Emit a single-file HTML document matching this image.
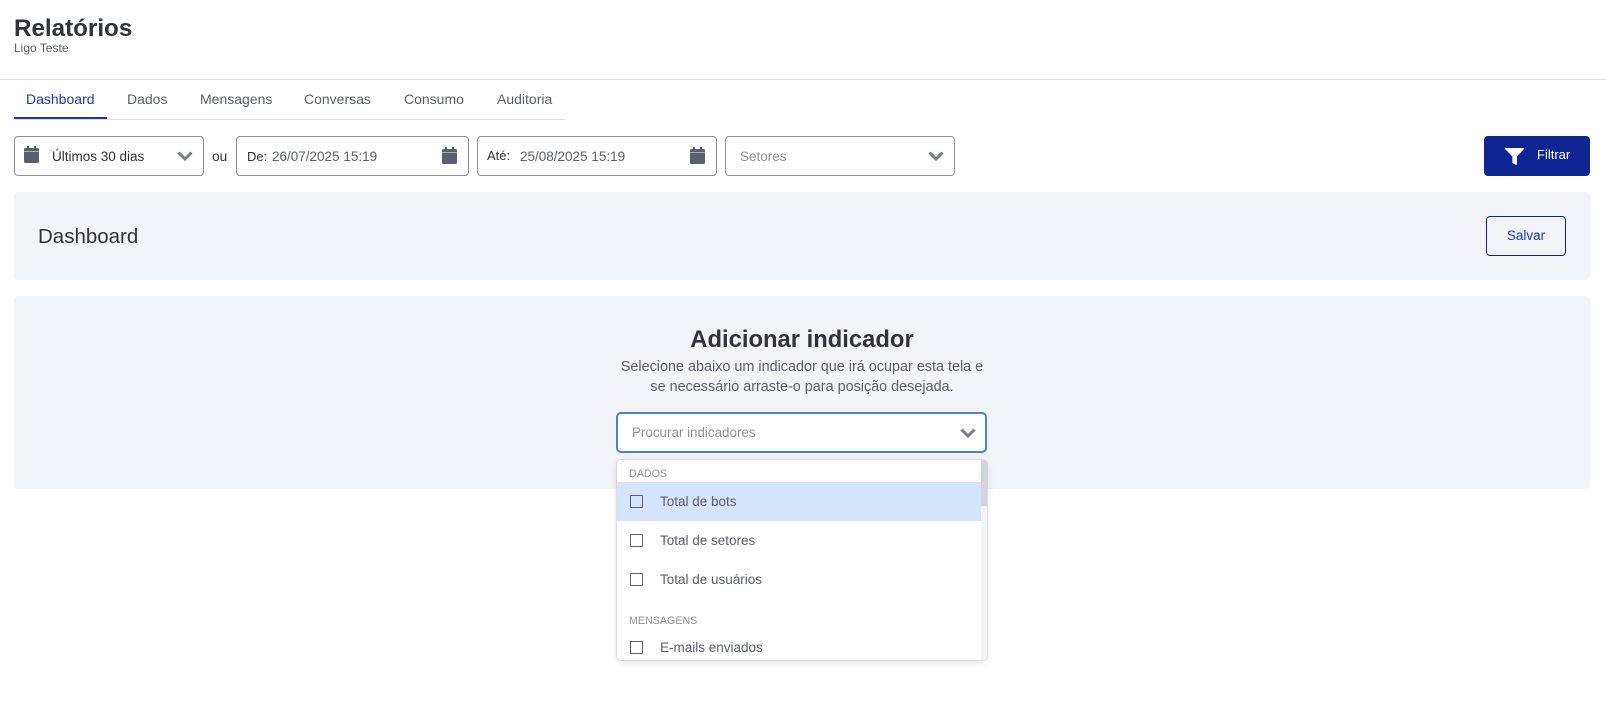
<!DOCTYPE html>
<html lang="pt-BR">
<head>
<meta charset="utf-8">
<title>Relatórios</title>
<style>
html,body{margin:0;padding:0;background:#fff}
body{width:1606px;height:722px;position:relative;overflow:hidden;font-family:"Liberation Sans",sans-serif;color:#5c5f6b}
.a{position:absolute;white-space:nowrap}
.box{position:absolute;box-sizing:border-box;background:#fff;border:1px solid #8f909b;border-radius:4px}
svg{position:absolute;display:block}
.tab{position:absolute;top:91px;font-size:14px;line-height:17px;color:#5c5f6b;white-space:nowrap}
.item{position:absolute;left:0;height:39px}
.cb{position:absolute;left:13px;box-sizing:border-box;width:13px;height:13px;border:1.5px solid #5c5f6b;border-radius:1px;background:transparent}
.lbl{position:absolute;left:43px;font-size:13.5px;line-height:16px;color:#5c5f6b;white-space:nowrap}
.grp{position:absolute;left:12px;font-size:10.7px;line-height:12px;color:#8f909b;white-space:nowrap}
</style>
</head>
<body>
<div class="a" style="left:14px;top:14px;font-size:24.2px;line-height:30px;font-weight:700;color:#30323c">Relatórios</div>
<div class="a" style="left:14px;top:41px;font-size:12px;line-height:14px;color:#5c5f6b">Ligo Teste</div>
<div class="a" style="left:0;top:79px;width:1606px;height:1px;background:#dedfe3"></div>

<div class="a" style="left:14px;top:119px;width:551px;height:1px;background:#dedfe3"></div>
<div class="a" style="left:14px;top:117px;width:93px;height:2px;background:#1a35b0"></div>
<div class="tab" style="left:26px;color:#1f3aa8">Dashboard</div>
<div class="tab" style="left:127px">Dados</div>
<div class="tab" style="left:200px">Mensagens</div>
<div class="tab" style="left:304px">Conversas</div>
<div class="tab" style="left:404px">Consumo</div>
<div class="tab" style="left:497px">Auditoria</div>

<div class="box" style="left:14px;top:136px;width:190px;height:40px"></div>
<svg style="left:24px;top:146px" width="15" height="17" viewBox="0 0 15 17"><path fill="#5c5f6b" d="M3 0h2v2h5V0h2v2h1.500A1.500 1.500 0 0 1 15 3.500V5.500H0V3.500A1.500 1.500 0 0 1 1.500 2H3zM0 6h15v9.500a1.500 1.500 0 0 1-1.500 1.500h-12A1.500 1.500 0 0 1 0 15.500z"/></svg>
<div class="a" style="left:52px;top:149px;font-size:13.5px;line-height:16px;color:#30323c">Últimos 30 dias</div>
<svg style="left:177px;top:151px" width="16" height="11" viewBox="0 0 16 11"><path fill="none" stroke="#7a7d87" stroke-width="3" d="M1.500 1.500 8 8l6.500-6.500"/></svg>
<div class="a" style="left:212px;top:149px;font-size:13.7px;line-height:16px;color:#30323c">ou</div>

<div class="box" style="left:236px;top:136px;width:233px;height:40px"></div>
<div class="a" style="left:247px;top:149px;font-size:13px;line-height:16px;color:#30323c">De:</div>
<div class="a" style="left:272px;top:149px;font-size:13.5px;line-height:16px;color:#5c5f6b">26/07/2025 15:19</div>
<svg style="left:442px;top:147px" width="15" height="17" viewBox="0 0 15 17"><path fill="#5c5f6b" d="M3 0h2v2h5V0h2v2h1.500A1.500 1.500 0 0 1 15 3.500V5.500H0V3.500A1.500 1.500 0 0 1 1.500 2H3zM0 6h15v9.500a1.500 1.500 0 0 1-1.500 1.500h-12A1.500 1.500 0 0 1 0 15.500z"/></svg>

<div class="box" style="left:477px;top:136px;width:240px;height:40px"></div>
<div class="a" style="left:487px;top:148px;font-size:13px;line-height:16px;color:#30323c">Até:</div>
<div class="a" style="left:520px;top:149px;font-size:13.5px;line-height:16px;color:#5c5f6b">25/08/2025 15:19</div>
<svg style="left:690px;top:147px" width="15" height="17" viewBox="0 0 15 17"><path fill="#5c5f6b" d="M3 0h2v2h5V0h2v2h1.500A1.500 1.500 0 0 1 15 3.500V5.500H0V3.500A1.500 1.500 0 0 1 1.500 2H3zM0 6h15v9.500a1.500 1.500 0 0 1-1.500 1.500h-12A1.500 1.500 0 0 1 0 15.500z"/></svg>

<div class="box" style="left:725px;top:136px;width:230px;height:40px"></div>
<div class="a" style="left:740px;top:149px;font-size:13.5px;line-height:16px;color:#8f909b">Setores</div>
<svg style="left:928px;top:151px" width="16" height="11" viewBox="0 0 16 11"><path fill="none" stroke="#7a7d87" stroke-width="3" d="M1.500 1.500 8 8l6.500-6.500"/></svg>

<div class="a" style="left:1484px;top:136px;width:106px;height:40px;background:#0f2594;border-radius:4px"></div>
<svg style="left:1505px;top:148px" width="19" height="17" viewBox="0 0 19 17"><path fill="#fff" d="M.8 0h17.400c.7 0 1 .8.500 1.300L12 8.500v7.500c0 .6-.6 1-1.100.7l-3-1.500c-.3-.2-.5-.5-.5-.8V8.500L.3 1.300C-.2.800.1 0 .8 0z"/></svg>
<div class="a" style="left:1537px;top:147px;font-size:13px;line-height:16px;color:#fff">Filtrar</div>

<div class="a" style="left:14px;top:192px;width:1576px;height:88px;background:#f3f4f8;border-radius:4px"></div>
<div class="a" style="left:38px;top:225px;font-size:20.5px;line-height:24px;color:#30323c">Dashboard</div>
<div class="a" style="left:1486px;top:216px;width:80px;height:40px;box-sizing:border-box;border:1px solid #0f2594;border-radius:4px"></div>
<div class="a" style="left:1486px;top:228px;width:80px;text-align:center;font-size:13.5px;line-height:16px;color:#1f3aa8">Salvar</div>

<div class="a" style="left:14px;top:296px;width:1576px;height:193px;background:#f3f4f8;border-radius:4px"></div>
<div class="a" style="left:14px;top:325px;width:1576px;text-align:center;font-size:23.8px;line-height:30px;font-weight:700;color:#30323c">Adicionar indicador</div>
<div class="a" style="left:14px;top:357px;width:1576px;text-align:center;font-size:14.4px;line-height:20px;color:#5c5f6b">Selecione abaixo um indicador que irá ocupar esta tela e</div>
<div class="a" style="left:14px;top:377px;width:1576px;text-align:center;font-size:14.4px;line-height:20px;color:#5c5f6b">se necessário arraste-o para posição desejada.</div>

<div class="a" style="left:616px;top:412px;width:371px;height:41px;box-sizing:border-box;background:#fff;border:2px solid #4a80d8;border-radius:5px"></div>
<div class="a" style="left:632px;top:425px;font-size:13.4px;line-height:16px;color:#8f909b">Procurar indicadores</div>
<svg style="left:960px;top:428px" width="16" height="11" viewBox="0 0 16 11"><path fill="none" stroke="#7a7d87" stroke-width="3" d="M1.500 1.500 8 8l6.500-6.500"/></svg>

<div class="a" style="left:617px;top:460px;width:370px;height:200px;background:#fff;border-radius:4px;box-shadow:0 0 0 1px rgba(0,0,0,.07),0 2px 8px rgba(0,0,0,.12);overflow:hidden">
  <div class="a" style="left:364px;top:0;width:6px;height:200px;background:#f3f4f8"></div>
  <div class="a" style="left:364px;top:0;width:6px;height:46px;background:#d3d5de"></div>
  <div class="grp" style="top:8px">DADOS</div>
  <div class="item" style="top:22px;background:#d5e3fb;width:364px"></div>
  <div class="cb" style="top:35px"></div><div class="lbl" style="top:34px">Total de bots</div>
  <div class="cb" style="top:74px"></div><div class="lbl" style="top:73px">Total de setores</div>
  <div class="cb" style="top:113px"></div><div class="lbl" style="top:112px">Total de usuários</div>
  <div class="grp" style="top:155px">MENSAGENS</div>
  <div class="cb" style="top:181px"></div><div class="lbl" style="top:180px">E-mails enviados</div>
</div>
</body>
</html>
